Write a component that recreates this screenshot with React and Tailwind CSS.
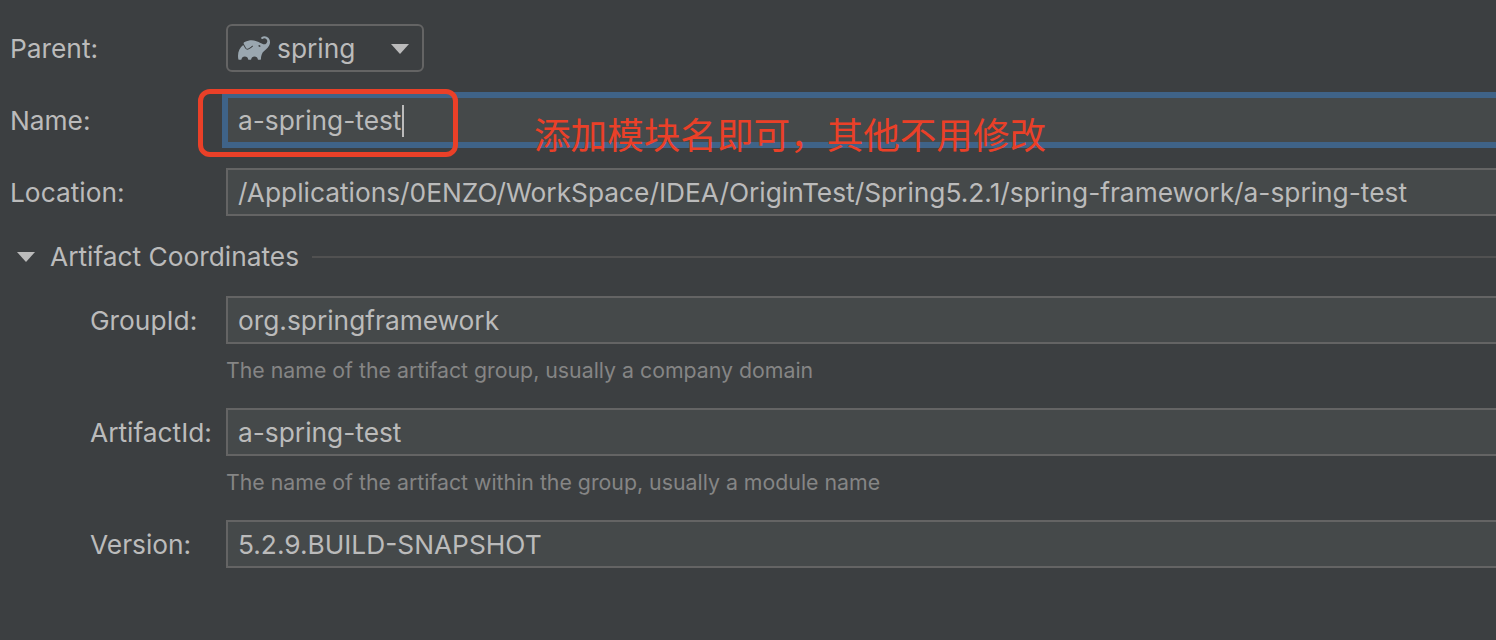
import { SiGradle } from 'react-icons/si';

const boxClass = 'h-12 flex-1 min-w-0 -mr-2 flex items-center pl-[10px] pt-0.5 bg-[#45494a] border-2 border-[#646464] text-[#bbbbbb]';

function Row({ label, indent, children }) {
  return (
    <div className="flex items-center h-12">
      <div className={`w-[226px] shrink-0 pt-0.5 text-[#bbbbbb] ${indent ? 'pl-[90px]' : 'pl-[10px]'}`}>{label}</div>
      {children}
    </div>
  );
}

function Hint({ children }) {
  return <div className="h-8 mt-2.5 pl-[226px] text-[21.3px] leading-8 text-[#858585]">{children}</div>;
}

export default function App() {
  return (
    <div
      className="relative w-[1496px] h-[640px] overflow-hidden bg-[#3c3f41] pt-6 text-[26.3px] leading-none"
      style={{ fontFamily: 'Inter, "Noto Sans CJK SC", sans-serif' }}
    >
      <Row label="Parent:">
        <div className="w-[198px] h-12 flex items-center pl-[10px] pt-0.5 rounded-md border-2 border-[#646464] text-[#bbbbbb]">
          <SiGradle className="w-8 h-8 text-[#9aa7b0] -mt-0.5" />
          <span className="ml-[7px]">spring</span>
          <div className="ml-auto mr-[13px] w-0 h-0 border-x-[9px] border-x-transparent border-t-[10px] border-t-[#bbbbbb]" />
        </div>
      </Row>

      <div className="mt-6">
        <Row label="Name:">
          <div className="h-14 flex-1 min-w-0 -mr-2 -ml-1 flex items-center pl-[10px] pt-0.5 bg-[#45494a] border-[6px] border-[#3f6388] text-[#bbbbbb]">
            <span>a-spring-test</span>
            <span className="w-[1.5px] h-8 bg-[#bbbbbb] ml-px" />
          </div>
        </Row>
      </div>

      <div className="mt-6">
        <Row label="Location:">
          <div className={boxClass}>/Applications/0ENZO/WorkSpace/IDEA/OriginTest/Spring5.2.1/spring-framework/a-spring-test</div>
        </Row>
      </div>

      <div className="mt-6 h-[34px] flex items-center text-[#bbbbbb]">
        <div className="ml-[17px] w-0 h-0 border-x-[9px] border-x-transparent border-t-[10px] border-t-[#bbbbbb]" />
        <span className="ml-[15px]">Artifact Coordinates</span>
        <div className="ml-[13px] flex-1 h-0.5 bg-[#515151]" />
      </div>

      <div className="mt-[22px]">
        <Row label="GroupId:" indent>
          <div className={boxClass}>org.springframework</div>
        </Row>
        <Hint>The name of the artifact group, usually a company domain</Hint>
      </div>

      <div className="mt-[22px]">
        <Row label="ArtifactId:" indent>
          <div className={boxClass}>a-spring-test</div>
        </Row>
        <Hint>The name of the artifact within the group, usually a module name</Hint>
      </div>

      <div className="mt-[22px]">
        <Row label="Version:" indent>
          <div className={boxClass}>5.2.9.BUILD-SNAPSHOT</div>
        </Row>
      </div>

      {/* annotation drawn over the screenshot */}
      <div className="absolute left-[198px] top-[89px] w-[260px] h-[68px] rounded-[12px] border-[5px] border-[#ea4028]" />
      <div className="absolute left-[534px] top-[114px] text-[36.6px] leading-[44px] text-[#ea4028] whitespace-nowrap">
        添加模块名即可，其他不用修改
      </div>
    </div>
  );
}
